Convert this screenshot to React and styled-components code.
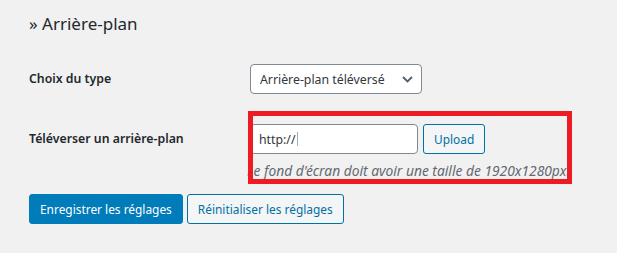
import styled, { createGlobalStyle } from "styled-components";

const GlobalStyle = createGlobalStyle`
  html, body {
    margin: 0;
    padding: 0;
    background: #f1f1f1;
  }
  body {
    font-family: "Noto Sans", "Open Sans", sans-serif;
    color: #23282d;
    font-size: 12.2px;
  }
`;

function App() {
  return (
    <Wrap>
      <GlobalStyle />
      <Title>» Arrière-plan</Title>
      <FormTable>
        <Row $gap={27}>
          <Label>Choix du type</Label>
          <Field>
            <SelectBox>
              <span>Arrière-plan téléversé</span>
              <svg width="11" height="7" viewBox="0 0 11 7">
                <path d="M1 1l4.5 4.5L10 1" fill="none" stroke="#555d66" strokeWidth="1.8" />
              </svg>
            </SelectBox>
          </Field>
        </Row>
        <Row $gap={30}>
          <Label>Téléverser un arrière-plan</Label>
          <Field>
            <UploadLine>
              <TextInput>
                http://<Caret />
              </TextInput>
              <Button>Upload</Button>
            </UploadLine>
            <Description>
              Le fond d'écran doit avoir une taille de 1920x1280px.
            </Description>
            <Highlight />
          </Field>
        </Row>
      </FormTable>
      <Submit>
        <Button $primary>Enregistrer les réglages</Button>
        <Button>Réinitialiser les réglages</Button>
      </Submit>
    </Wrap>
  );
}

export default App;

const Wrap = styled.div`
  padding: 0 29px;
  width: 617px;
  height: 253px;
  box-sizing: border-box;
  overflow: hidden;
`;

const Title = styled.h2`
  margin: 0;
  padding-top: 11px;
  font-size: 17px;
  font-weight: 400;
  line-height: 26px;
  color: #23282d;
`;

const FormTable = styled.div`
  display: flex;
  flex-direction: column;
`;

const Row = styled.div`
  display: flex;
  align-items: flex-start;
  margin-top: ${(p) => p.$gap}px;
`;

const Label = styled.div`
  width: 221px;
  flex-shrink: 0;
  font-size: 12.3px;
  font-weight: 600;
  line-height: 30px;
  color: #23282d;
`;

const Field = styled.div`
  position: relative;
  display: flex;
  flex-direction: column;
`;

const SelectBox = styled.div`
  box-sizing: border-box;
  width: 172px;
  height: 30px;
  display: flex;
  align-items: center;
  justify-content: space-between;
  padding: 0 8px 0 9px;
  background: #fff;
  border: 1px solid #7e8993;
  border-radius: 4px;
  font-size: 12.3px;
  color: #32373c;
  white-space: nowrap;
`;

const UploadLine = styled.div`
  display: flex;
  gap: 5px;
`;

const TextInput = styled.div`
  box-sizing: border-box;
  width: 168px;
  height: 30px;
  display: flex;
  align-items: center;
  padding: 0 8px;
  background: #fff;
  border: 1px solid #7e8993;
  border-radius: 4px;
  font-size: 12.3px;
  color: #32373c;
`;

const Caret = styled.span`
  display: inline-block;
  width: 1px;
  height: 14px;
  margin-left: 1px;
  background: #a7aaad;
`;

const Button = styled.button`
  box-sizing: border-box;
  height: 30px;
  padding: 0 10px;
  border-radius: 3px;
  font-family: "Noto Sans", "Open Sans", sans-serif;
  font-size: 11.9px;
  line-height: 28px;
  white-space: nowrap;
  cursor: pointer;
  border: 1px solid ${(p) => (p.$primary ? "#007cba" : "#0071a1")};
  background: ${(p) => (p.$primary ? "#007cba" : "#f3f5f6")};
  color: ${(p) => (p.$primary ? "#fff" : "#0071a1")};
`;

const Description = styled.p`
  margin: 8px 0 0 -3px;
  font-size: 13.8px;
  font-style: italic;
  line-height: 18px;
  color: #646970;
  white-space: nowrap;
`;

const Highlight = styled.div`
  position: absolute;
  left: -2px;
  top: -13px;
  width: 324px;
  height: 73px;
  box-sizing: border-box;
  border: 5px solid #ed1c24;
  pointer-events: none;
`;

const Submit = styled.div`
  display: flex;
  gap: 4px;
  margin-top: 14px;
`;
